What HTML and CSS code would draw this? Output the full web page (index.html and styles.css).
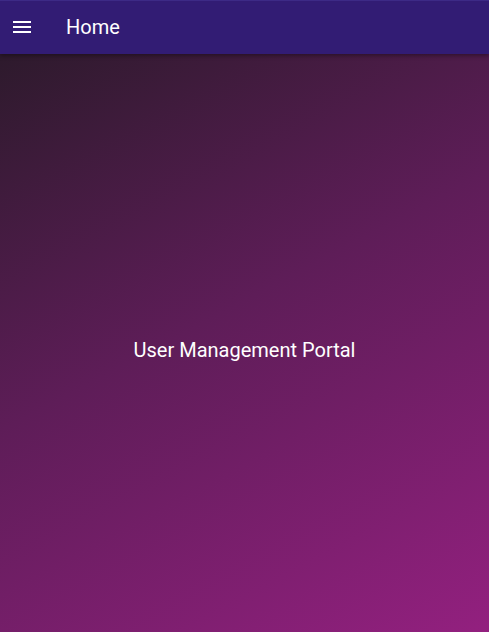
FILE: index.html
```html
<!DOCTYPE html>
<html>
<head>
<meta charset="utf-8">
<link rel="stylesheet" href="styles.css">
</head>
<body>
<div class="app">
  <header class="toolbar">
    <button class="menu-btn" aria-label="menu">
      <svg width="24" height="24" viewBox="0 0 24 24"><path fill="#fff" d="M3 18h18v-2H3v2zm0-5h18v-2H3v2zm0-7v2h18V6H3z"/></svg>
    </button>
    <span class="title">Home</span>
  </header>
  <main class="content">
    <div class="headline">User Management Portal</div>
  </main>
</div>
</body>
</html>
```
FILE: styles.css
```css
html, body {
  margin: 0;
  padding: 0;
  height: 100%;
}
body {
  font-family: Roboto, "Liberation Sans", sans-serif;
  overflow: hidden;
}
.app {
  display: flex;
  flex-direction: column;
  height: 632px;
}
.toolbar {
  position: relative;
  z-index: 2;
  height: 54px;
  flex: 0 0 54px;
  box-sizing: border-box;
  background: #321c74;
  border-top: 1px solid #3d2a86;
  display: flex;
  align-items: center;
  padding-left: 10px;
  box-shadow: 0 2px 4px rgba(0,0,0,0.35);
}
.menu-btn {
  background: none;
  border: 0;
  padding: 0;
  width: 24px;
  height: 24px;
  display: flex;
  margin-top: -2px;
}
.title {
  color: #fff;
  font-size: 20px;
  font-weight: 400;
  margin-left: 32px;
  margin-top: -1px;
}
.content {
  flex: 1;
  background: linear-gradient(152deg, #2d1a2c 0%, #5e1d58 45%, #93207f 100%);
  display: flex;
  align-items: center;
  justify-content: center;
}
.headline {
  color: #fff;
  font-size: 20px;
  margin-top: 14px;
}
```
